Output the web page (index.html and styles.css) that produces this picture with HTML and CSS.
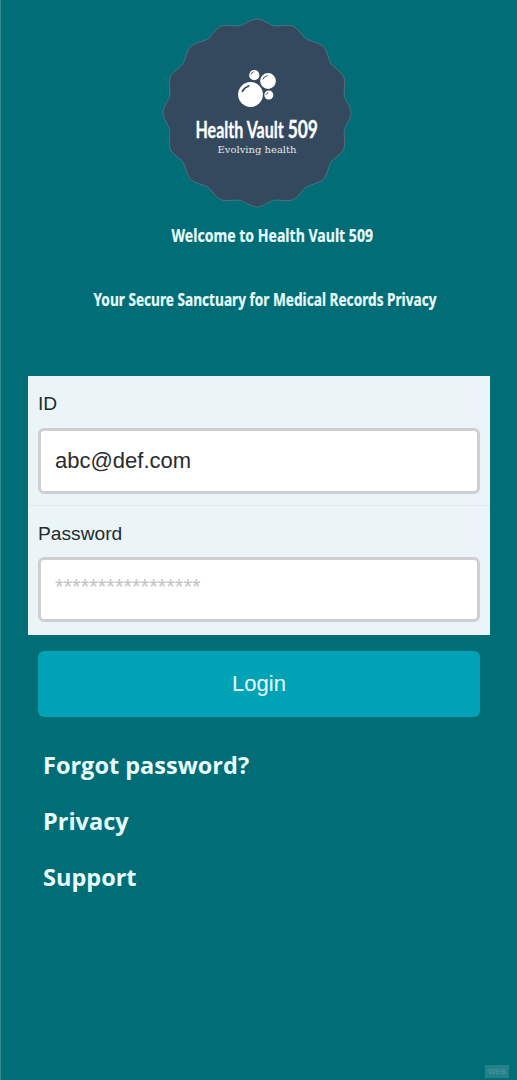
FILE: index.html
```
<!DOCTYPE html>
<html lang="en">
<head>
<meta charset="utf-8">
<title>Health Vault 509</title>
<link rel="stylesheet" href="styles.css">
</head>
<body>
<main class="screen">
  <header class="brand">
    <svg class="logo" viewBox="-96 -96 192 192" role="img" aria-label="Health Vault 509">
      <defs>
        <path id="lobe" d="M-17.4 -87.3C-12.8 -88.2 -5.5 -94 0 -94S12.8 -88.2 17.4 -87.3"/>
        <g id="quarter">
          <use href="#lobe"/>
          <use href="#lobe" transform="rotate(22.5)"/>
          <use href="#lobe" transform="rotate(45)"/>
          <use href="#lobe" transform="rotate(67.5)"/>
        </g>
      </defs>
      <g class="badge">
        <use href="#quarter"/>
        <use href="#quarter" transform="rotate(90)"/>
        <use href="#quarter" transform="rotate(180)"/>
        <use href="#quarter" transform="rotate(270)"/>
      </g>
      <circle class="badge-core" r="88.3"/>
      <g class="bubbles">
        <circle cx="-6.5" cy="-18.5" r="12.4"/>
        <circle cx="11" cy="-32" r="7.9"/>
        <circle cx="-2.7" cy="-37.8" r="5.1"/>
        <circle cx="11.8" cy="-18" r="4.5"/>
      </g>
      <g class="glints">
        <path stroke-width="1.8" d="M-14.5 -21.8Q-12.5 -25.6 -8.3 -27"/>
        <path d="M6 -34Q7 -36.5 10 -37.2M-5.8 -39Q-5.2 -40.6 -3.6 -41.2M9.3 -18.6Q9.8 -20 11 -20.5"/>
      </g>
      <text class="wordmark" x="-61.5" y="24.5" textLength="122.5" lengthAdjust="spacingAndGlyphs">Health Vault <tspan class="number">509</tspan></text>
      <text class="tagline" x="-39.5" y="40" textLength="79" lengthAdjust="spacingAndGlyphs">Evolving health</text>
    </svg>
    <svg class="heading" viewBox="0 0 517 30"><text x="171.5" y="21" textLength="201.5" lengthAdjust="spacingAndGlyphs">Welcome to Health Vault 509</text></svg>
    <svg class="heading" viewBox="0 0 517 30"><text x="93.5" y="21" textLength="343" lengthAdjust="spacingAndGlyphs">Your Secure Sanctuary for Medical Records Privacy</text></svg>
  </header>
  <form class="login">
    <div class="fields">
      <label class="field">ID<input class="input" type="text" value="abc@def.com"></label>
      <label class="field">Password<input class="input secret" type="text" placeholder="*****************"></label>
    </div>
    <button class="submit" type="button">Login</button>
  </form>
  <nav class="links">
    <a class="link">Forgot password?</a>
    <a class="link">Privacy</a>
    <a class="link">Support</a>
  </nav>
  <footer class="footer"><span class="mark">WEB</span></footer>
</main>
</body>
</html>
```
FILE: styles.css
```
* { box-sizing: border-box; }
body { margin: 0; background: #006d77; }
.screen {
  display: flex;
  flex-direction: column;
  width: 517px;
  height: 1080px;
  overflow: hidden;
  border-left: 1px solid #338b92;
  font-family: "Liberation Sans", Arial, sans-serif;
}
.brand {
  display: flex;
  flex-direction: column;
  margin-left: -1px;
  padding-top: 17px;
}
.logo { width: 192px; height: 192px; margin-left: 161px; }
.badge { fill: #34495e; stroke: #607887; stroke-width: 0.7; }
.badge-core { fill: #34495e; }
.bubbles { fill: #fff; }
.glints { fill: none; stroke: #34495e; stroke-width: 1; stroke-linecap: round; }
.wordmark {
  fill: #fff;
  stroke: #fff;
  stroke-width: 0.3;
  font-family: Lato, sans-serif;
  font-size: 23px;
  font-weight: 700;
}
.number { font-size: 25px; }
.tagline { fill: #e3e7eb; font-family: "DejaVu Serif", serif; font-size: 8.5px; }
.heading { width: 517px; height: 30px; margin-top: 12px; overflow: visible; }
.heading + .heading { margin-top: 34px; }
.heading text {
  fill: #e9fcfd;
  stroke: #e9fcfd;
  stroke-width: 0.2;
  font-family: "Noto Sans", sans-serif;
  font-size: 18px;
  font-weight: 700;
}
.login { padding: 61px 27px 0; }
.fields { width: 462px; background: #ebf5f8; }
.field {
  display: flex;
  flex-direction: column;
  height: 129px;
  padding: 17px 10px 0;
  color: #202b30;
  font-size: 19.2px;
  line-height: 22px;
}
.field + .field { height: 130px; border-top: 1px solid #e2eaed; }
.input {
  width: 442px;
  height: 66px;
  margin-top: 13px;
  padding: 0 14px;
  border: 3px solid #cdcfd1;
  border-radius: 6px;
  background: #fff;
  color: #292b2d;
  font: 22px "Liberation Sans", Arial, sans-serif;
  outline: 0;
}
.secret { height: 65px; margin-top: 12px; padding-bottom: 5px; }
.input::placeholder { color: #c3c3c3; opacity: 1; }
.submit {
  display: block;
  width: 442px;
  height: 66px;
  margin: 16px 10px 0;
  padding: 0;
  border: 0;
  border-radius: 6px;
  background: #00a3b6;
  color: #e9fcff;
  font: 22px "Liberation Sans", Arial, sans-serif;
}
.links {
  display: flex;
  flex-direction: column;
  padding: 20px 42px 0;
}
.link {
  height: 56px;
  color: #e9fcfd;
  font: 700 23.5px/56px "Open Sans", sans-serif;
}
.footer { display: flex; justify-content: flex-end; margin: auto 8px 2px; }
.mark {
  width: 24px;
  height: 13px;
  background: #23818a;
  color: #40929a;
  font-size: 8px;
  font-weight: 700;
  line-height: 13px;
  text-align: center;
}
```
